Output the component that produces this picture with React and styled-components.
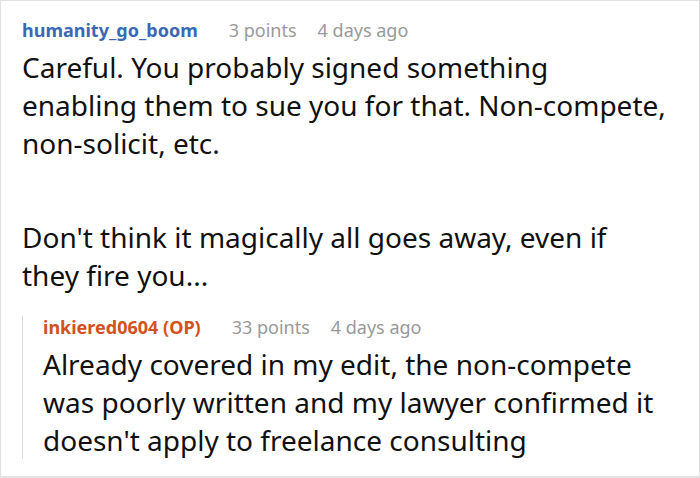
import styled, {createGlobalStyle} from 'styled-components';

const GlobalStyle = createGlobalStyle`
    html, body {
        margin: 0;
        padding: 0;
        background: #fff;
    }
    body {
        font-family: "Noto Sans", "Open Sans", sans-serif;
    }
`

// each paragraph is kept as the lines it shows in the screenshot
const thread = {
    author: 'humanity_go_boom',
    points: 3,
    age: '4 days ago',
    color: '#3b68b4',
    body: [
        ['Careful. You probably signed something', 'enabling them to sue you for that. Non-compete,', 'non-solicit, etc.'],
        ["Don't think it magically all goes away, even if", 'they fire you...'],
    ],
    replies: [
        {
            author: 'inkiered0604 (OP)',
            points: 33,
            age: '4 days ago',
            color: '#d4501f',
            body: [
                ['Already covered in my edit, the non-compete', 'was poorly written and my lawyer confirmed it', "doesn't apply to freelance consulting"],
            ],
        },
    ],
}

const Paragraph = ({lines}) => (
    <p>
        {lines.map((line, i) => (
            <span key={i}>{line}{i < lines.length - 1 && <br />}</span>
        ))}
    </p>
)

const Comment = ({comment, nested}) => (
    <CommentBox $nested={nested}>
        <Meta>
            <Author style={{color: comment.color}}>{comment.author}</Author>
            <Stat>{comment.points} points</Stat>
            <Stat>{comment.age}</Stat>
        </Meta>
        <Body>
            {comment.body.map((lines, i) => <Paragraph key={i} lines={lines} />)}
        </Body>
        {comment.replies && comment.replies.map((r, i) => (
            <Comment key={i} comment={r} nested />
        ))}
    </CommentBox>
)

const App = () => (
    <>
        <GlobalStyle />
        <Frame>
            <Comment comment={thread} />
        </Frame>
    </>
)

const Frame = styled.div`
    box-sizing: border-box;
    width: 700px;
    height: 478px;
    border: 1px solid #e2e2e2;
    border-bottom-width: 2px;
    overflow: hidden;
    padding: 18px 0 0 21px;
`

const CommentBox = styled.div`
    ${p => p.$nested && `
        margin-top: 22px;
        border-left: 1px solid #dcdcdc;
        padding-left: 20px;
    `}
`

const Meta = styled.div`
    display: flex;
    align-items: baseline;
    gap: 21px;
    font-size: 18px;
    line-height: 22px;
    margin-bottom: 7px;
`

const Author = styled.span`
    font-weight: 700;
    margin-right: 10px;
`

const Stat = styled.span`
    color: #999;
`

const Body = styled.div`
    font-size: 28px;
    line-height: 38px;
    color: #111;
    white-space: nowrap;

    p {
        margin: 0;
    }

    p + p {
        margin-top: 56px;
    }
`

export default App
